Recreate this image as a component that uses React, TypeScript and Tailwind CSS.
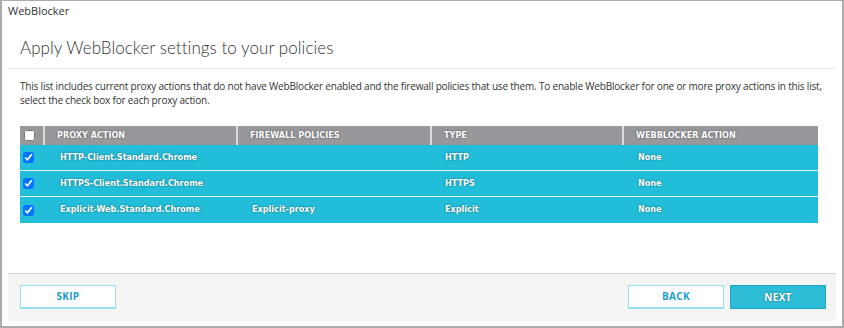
import React from 'react';

const rows = [
  { name: 'HTTP-Client.Standard.Chrome', policies: '', type: 'HTTP', action: 'None' },
  { name: 'HTTPS-Client.Standard.Chrome', policies: '', type: 'HTTPS', action: 'None' },
  { name: 'Explicit-Web.Standard.Chrome', policies: 'Explicit-proxy', type: 'Explicit', action: 'None' },
];

const cellText = "font-['DejaVu_Sans_Condensed','Liberation_Sans',sans-serif] font-bold text-white [text-shadow:0_0_2px_rgba(0,0,0,0.5)]";

export default function App() {
  return (
    <div className="w-[844px] h-[328px] bg-white border-l-2 border-r-2 border-t border-b-2 border-[#ababab] flex flex-col font-['Open_Sans',sans-serif] text-[#333]">
      <div className="flex-1 flex flex-col mx-[6px]">
        {/* Header */}
        <div className="h-[20px] flex items-center text-[11px] text-[#333]">WebBlocker</div>

        {/* Title */}
        <div className="mt-[15px] pl-[12px] pb-[8px] border-b border-[#e6e6e6]">
          <h1 className="font-['Lato',sans-serif] font-light text-[17px] leading-[24px] text-[#333] tracking-[0.05px]">
            Apply WebBlocker settings to your policies
          </h1>
        </div>

        {/* Description */}
        <p className="pt-[10px] pl-[12px] text-[10px] tracking-[-0.19px] leading-[14px] text-[#333]">
          This list includes current proxy actions that do not have WebBlocker enabled and the firewall policies that use them. To enable WebBlocker for one or more proxy actions in this list, select the check box for each proxy action.
        </p>

        {/* Table */}
        <div className="mt-[19px] ml-[12px] w-[798px]">
          <div className="flex h-[19px] bg-[#98979c] items-center">
            <div className="w-[25px] h-full flex items-center pl-[4px] border-r-2 border-[#dcdcdc]">
              <input type="checkbox" readOnly className="w-[11px] h-[11px] m-0" />
            </div>
            <div className={`w-[193px] h-full flex items-center pl-[12px] border-r-2 border-[#dcdcdc] text-[9px] ${cellText}`}>PROXY ACTION</div>
            <div className={`w-[194px] h-full flex items-center pl-[12px] border-r-2 border-[#dcdcdc] text-[9px] ${cellText}`}>FIREWALL POLICIES</div>
            <div className={`w-[192px] h-full flex items-center pl-[12px] border-r-2 border-[#dcdcdc] text-[9px] ${cellText}`}>TYPE</div>
            <div className={`flex-1 h-full flex items-center pl-[12px] text-[9px] ${cellText}`}>WEBBLOCKER ACTION</div>
          </div>
          {rows.map((r, i) => (
            <div key={r.name} className={`flex h-[26px] bg-[#22bdd8] items-center ${i < rows.length - 1 ? 'border-b border-[#e8f8fb]' : ''}`}>
              <div className="w-[25px] flex items-center pl-[3px]">
                <input type="checkbox" checked readOnly className="w-[11px] h-[11px] m-0" />
              </div>
              <div className={`w-[193px] pl-[15px] text-[9px] ${cellText}`}>{r.name}</div>
              <div className={`w-[194px] pl-[14px] text-[9px] ${cellText}`}>{r.policies}</div>
              <div className={`w-[192px] pl-[13px] text-[9px] ${cellText}`}>{r.type}</div>
              <div className={`flex-1 pl-[14px] text-[9px] ${cellText}`}>{r.action}</div>
            </div>
          ))}
        </div>

        {/* Footer */}
        <div className="mt-auto mb-[5px] h-[48px] bg-[#f4f4f4] border-t border-[#d2d2d2] rounded-b-[5px] flex items-start pt-[11px] pl-[12px] pr-[10px]">
          <button className="w-[96px] h-[24px] bg-white border border-b-2 border-[#96def0] text-[10px] font-bold text-[#1a9ccb] tracking-[0.3px]">SKIP</button>
          <div className="flex-1" />
          <button className="w-[96px] h-[24px] bg-white border border-b-2 border-[#96def0] text-[10px] font-bold text-[#1a9ccb] tracking-[0.3px]">BACK</button>
          <button className="ml-[6px] w-[96px] h-[24px] bg-[#2dbdd6] border border-[#1ea6c4] text-[10px] font-bold text-white tracking-[0.3px] [text-shadow:0_0_2px_rgba(0,0,0,0.5)]">NEXT</button>
        </div>
      </div>
    </div>
  );
}
